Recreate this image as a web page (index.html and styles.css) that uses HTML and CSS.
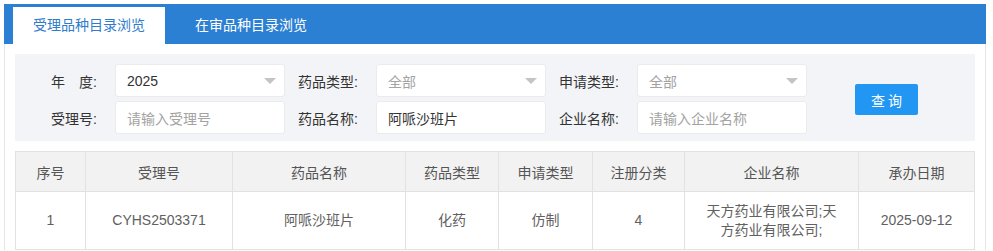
FILE: index.html
```html
<!DOCTYPE html>
<html lang="zh-CN">
<head>
  <meta charset="UTF-8" />
  <title>受理品种目录浏览</title>
  <link rel="stylesheet" href="styles.css">
</head>
<body>

  <div class="panel">
    <!-- tab bar -->
    <div class="tabs">
      <div class="tab active">受理品种目录浏览</div>
      <div class="tab">在审品种目录浏览</div>
    </div>

    <div class="content">
      <!-- search form -->
      <div class="search">
        <label class="lbl">年&emsp;度:</label>
        <div class="field select"><span class="val">2025</span><i class="arrow"></i></div>
        <label class="lbl">药品类型:</label>
        <div class="field select"><span class="ph">全部</span><i class="arrow"></i></div>
        <label class="lbl">申请类型:</label>
        <div class="field select"><span class="ph">全部</span><i class="arrow"></i></div>
        <button class="btn">查询</button>

        <label class="lbl">受理号:</label>
        <div class="field"><span class="ph">请输入受理号</span></div>
        <label class="lbl">药品名称:</label>
        <div class="field"><span class="val">阿哌沙班片</span></div>
        <label class="lbl">企业名称:</label>
        <div class="field"><span class="ph">请输入企业名称</span></div>
      </div>

      <!-- result table -->
      <table class="grid">
        <colgroup>
          <col style="width:70px">
          <col style="width:147px">
          <col style="width:173px">
          <col style="width:93px">
          <col style="width:94px">
          <col style="width:92px">
          <col style="width:174px">
          <col style="width:116px">
        </colgroup>
        <thead>
          <tr>
            <th>序号</th>
            <th>受理号</th>
            <th>药品名称</th>
            <th>药品类型</th>
            <th>申请类型</th>
            <th>注册分类</th>
            <th>企业名称</th>
            <th>承办日期</th>
          </tr>
        </thead>
        <tbody>
          <tr>
            <td>1</td>
            <td>CYHS2503371</td>
            <td>阿哌沙班片</td>
            <td>化药</td>
            <td>仿制</td>
            <td>4</td>
            <td>天方药业有限公司;天方药业有限公司;</td>
            <td>2025-09-12</td>
          </tr>
        </tbody>
      </table>
    </div>
  </div>

</body>
</html>
```

FILE: styles.css
```css
body {
  margin: 4px 7px 0 4px;
  background: #fff;
  color: #333;
  font-family: "Liberation Sans", "Noto Sans CJK SC", sans-serif;
  font-size: 14px;
  overflow: hidden;
}

.panel {
  border-left: 1px solid #e6e6e6;
  border-right: 1px solid #e6e6e6;
}

/* tabs */
.tabs {
  display: flex;
  align-items: flex-end;
  gap: 10px;
  height: 40px;
  background: #2c80d3;
  margin: 0 -1px;
  padding-left: 9px;
}

.tab {
  height: 37px;
  line-height: 37px;
  padding: 0 20px;
  color: #fff;
}

.tab.active {
  background: #fff;
  color: #2f7ccc;
}

.content {
  padding: 10px 10px 0 10px;
}

/* search form */
.search {
  display: grid;
  grid-template-columns: 100px 170px 91px 170px 91px 170px 111px;
  grid-template-rows: 33px 33px;
  row-gap: 4px;
  align-items: center;
  background: #f3f4f7;
  padding: 10px 0 7px 0;
}

.lbl {
  text-align: right;
  padding-right: 18px;
  color: #333;
}

.field {
  height: 33px;
  box-sizing: border-box;
  background: #fff;
  border: 1px solid #ebebeb;
  border-radius: 3px;
  padding: 0 11px;
  display: flex;
  align-items: center;
  justify-content: space-between;
}

.field .val {
  color: #333;
}

.field .ph {
  color: #a3a3a3;
}

.arrow {
  width: 0;
  height: 0;
  border-left: 6px solid transparent;
  border-right: 6px solid transparent;
  border-top: 6px solid #c4c4c4;
  margin-right: -3px;
}

.btn {
  grid-column: 7;
  grid-row: 1 / span 2;
  align-self: center;
  justify-self: start;
  margin-left: 48px;
  margin-top: 1px;
  width: 63px;
  height: 31px;
  border: none;
  border-radius: 2px;
  background: #2196f3;
  color: #fff;
  font-family: inherit;
  font-size: 14px;
  letter-spacing: 3px;
  text-indent: 3px;
  cursor: pointer;
}

/* result table */
.grid {
  margin-top: 10px;
  width: 959px;
  border-collapse: collapse;
  table-layout: fixed;
  color: #555;
}

.grid th,
.grid td {
  border: 1px solid #e2e2e2;
  text-align: center;
  font-weight: normal;
  padding: 0 15px;
}

.grid th {
  height: 39px;
  background: #f2f2f2;
}

.grid td {
  height: 57px;
  line-height: 19px;
  color: #616161;
}
```
